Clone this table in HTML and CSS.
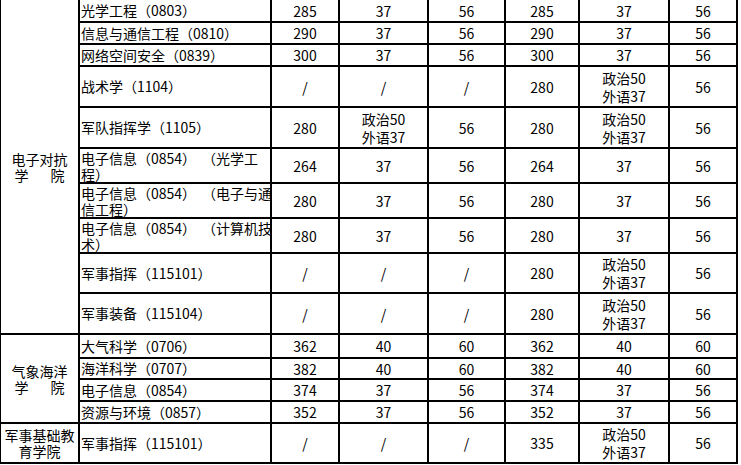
FILE: index.html
```html
<!DOCTYPE html>
<html lang="zh-CN">
<head>
<meta charset="utf-8">
<title>分数线</title>
<link rel="stylesheet" href="styles.css">
</head>
<body>
<div class="sheet">
  <div class="college c1"><span>电子对抗</span><span class="spread"><i>学</i><i>院</i></span></div>
  <div class="major">光学工程（0803）</div>
  <div class="num">285</div><div class="num">37</div><div class="num">56</div><div class="num">285</div><div class="num">37</div><div class="num">56</div>

  <div class="major">信息与通信工程（0810）</div>
  <div class="num">290</div><div class="num">37</div><div class="num">56</div><div class="num">290</div><div class="num">37</div><div class="num">56</div>

  <div class="major">网络空间安全（0839）</div>
  <div class="num">300</div><div class="num">37</div><div class="num">56</div><div class="num">300</div><div class="num">37</div><div class="num">56</div>

  <div class="major">战术学（1104）</div>
  <div class="num">/</div><div class="num">/</div><div class="num">/</div><div class="num">280</div><div class="num two">政治50<br>外语37</div><div class="num">56</div>

  <div class="major">军队指挥学（1105）</div>
  <div class="num">280</div><div class="num two">政治50<br>外语37</div><div class="num">56</div><div class="num">280</div><div class="num two">政治50<br>外语37</div><div class="num">56</div>

  <div class="major wrap"><span>电子信息（0854）<b class="gap"></b>（光学工</span><span>程）</span></div>
  <div class="num">264</div><div class="num">37</div><div class="num">56</div><div class="num">264</div><div class="num">37</div><div class="num">56</div>

  <div class="major wrap"><span>电子信息（0854）<b class="gap"></b>（电子与通</span><span>信工程）</span></div>
  <div class="num">280</div><div class="num">37</div><div class="num">56</div><div class="num">280</div><div class="num">37</div><div class="num">56</div>

  <div class="major wrap"><span>电子信息（0854）<b class="gap"></b>（计算机技</span><span>术）</span></div>
  <div class="num">280</div><div class="num">37</div><div class="num">56</div><div class="num">280</div><div class="num">37</div><div class="num">56</div>

  <div class="major">军事指挥（115101）</div>
  <div class="num">/</div><div class="num">/</div><div class="num">/</div><div class="num">280</div><div class="num two">政治50<br>外语37</div><div class="num">56</div>

  <div class="major">军事装备（115104）</div>
  <div class="num">/</div><div class="num">/</div><div class="num">/</div><div class="num">280</div><div class="num two">政治50<br>外语37</div><div class="num">56</div>

  <div class="college c2"><span>气象海洋</span><span class="spread"><i>学</i><i>院</i></span></div>
  <div class="major">大气科学（0706）</div>
  <div class="num">362</div><div class="num">40</div><div class="num">60</div><div class="num">362</div><div class="num">40</div><div class="num">60</div>

  <div class="major">海洋科学（0707）</div>
  <div class="num">382</div><div class="num">40</div><div class="num">60</div><div class="num">382</div><div class="num">40</div><div class="num">60</div>

  <div class="major">电子信息（0854）</div>
  <div class="num">374</div><div class="num">37</div><div class="num">56</div><div class="num">374</div><div class="num">37</div><div class="num">56</div>

  <div class="major">资源与环境（0857）</div>
  <div class="num">352</div><div class="num">37</div><div class="num">56</div><div class="num">352</div><div class="num">37</div><div class="num">56</div>

  <div class="college c3"><span>军事基础教</span><span>育学院</span></div>
  <div class="major">军事指挥（115101）</div>
  <div class="num">/</div><div class="num">/</div><div class="num">/</div><div class="num">335</div><div class="num two">政治50<br>外语37</div><div class="num">56</div>
</div>
</body>
</html>
```

FILE: styles.css
```css
html, body {
  margin: 0;
  padding: 0;
  background: #ffffff;
}

body {
  font-family: "Noto Sans CJK SC", "Noto Sans", sans-serif;
  font-size: 14px;
  color: #000000;
}

.sheet {
  display: inline-grid;
  vertical-align: top;
  background: #000000;
  padding: 0 2px 2px 1px;
  gap: 2px;
  grid-template-columns: 77px 190px 66px 87px 75px 72px 88px 66px;
  grid-template-rows: 21px 20px 20px 39px 39px 33px 33px 33px 38px 39px 22px 19px 20px 20px 38px;
}

.sheet > div {
  background: #ffffff;
  display: flex;
  flex-direction: column;
  justify-content: center;
  white-space: nowrap;
  min-width: 0;
}

.college {
  grid-column: 1;
  align-items: center;
  line-height: 16px;
  text-align: center;
}

.c1 { grid-row: 1 / span 10; }
.c2 { grid-row: 11 / span 4; }
.c3 { grid-row: 15 / span 1; }

.spread {
  display: flex;
  justify-content: space-between;
  width: 50px;
}

.spread i {
  font-style: normal;
}

.major {
  text-align: left;
  line-height: 17px;
  padding-left: 1px;
}

.wrap {
  line-height: 16px;
}

.wrap span {
  display: block;
}

.wrap .gap {
  display: inline-block;
  width: 6px;
}

.num {
  align-items: center;
  text-align: center;
  line-height: 18px;
}
```
